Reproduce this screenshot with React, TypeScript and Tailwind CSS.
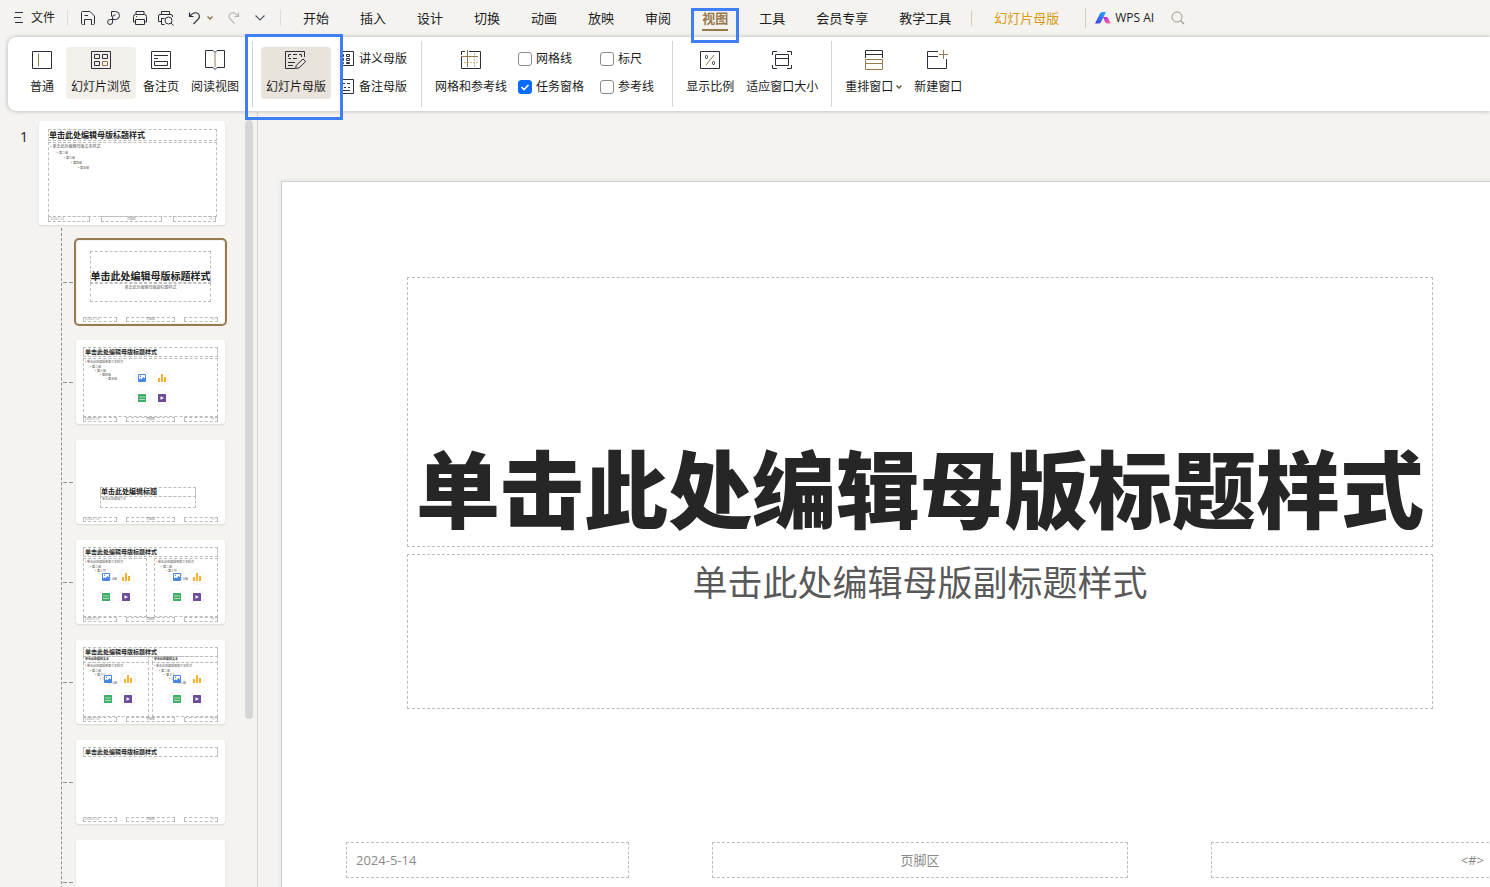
import React from 'react';

const INK = '#2b2f3a';
const BROWN = '#967a4e';

type IconProps = { w: number; h: number; children: React.ReactNode; color?: string };

function Icon({ w, h, children, color = INK }: IconProps) {
  return (
    <svg width={w} height={h} viewBox={`0 0 ${w} ${h}`} fill="none" stroke={color} strokeWidth="1" className="block shrink-0" aria-hidden="true">
      {children}
    </svg>
  );
}

/* ---------- title bar icons ---------- */

const MenuIcon = () => (
  <Icon w={10} h={12}>
    <path d="M1 .5h8M0 5.500h7M1 10.500h8" />
  </Icon>
);

const SaveIcon = () => (
  <Icon w={16} h={16}>
    <path d="M3.500 14.500h-1a1 1 0 0 1-1-1v-11a1 1 0 0 1 1-1h7.500l4.500 4.500v7.500a1 1 0 0 1-1 1h-1M4.500 15v-5.500h7V15M4.500 5.500h3.500" />
  </Icon>
);

const ExportIcon = () => (
  <Icon w={16} h={16}>
    <path d="M5.500 6.500V1.500h4a4 4 0 0 1 0 8H4.300a2.500 2.500 0 1 0 2.300 2.500V7a2 2 0 0 1 2-2h1" />
  </Icon>
);

const PrintIcon = () => (
  <Icon w={16} h={16}>
    <path d="M4 4.500v-3h8v3M3.500 12H1.500V6.500a2 2 0 0 1 2-2h9a2 2 0 0 1 2 2V12H12.500M3.500 9.500h9v5h-9zM4 6.500h1" />
  </Icon>
);

const PreviewIcon = () => (
  <Icon w={16} h={16}>
    <path d="M3.500 4.500v-3h8v3M3 11.500H.5V6a1.500 1.500 0 0 1 1.500-1.500h11A1.500 1.500 0 0 1 14.500 6v1M3.500 8v6.500h3M3.500 8.500h3" />
    <circle cx="10.500" cy="10.500" r="3.500" />
    <path d="M13 13l2.500 2.500" />
  </Icon>
);

const UndoIcon = () => (
  <Icon w={14} h={14}>
    <path strokeWidth="1.200" d="M1.500 1.500v4h4M2 5.200C4 2.500 6.500 1.200 9 2c2.800 1 3 4.200 1.200 6.200L5.500 13" />
  </Icon>
);

const RedoIcon = () => (
  <Icon w={14} h={14} color="#b5b4b1">
    <path strokeWidth="1.200" d="M11.500 1.500v4h-4M11 5.200C9 2.500 6.500 1.200 4.500 2 1.700 3 1.500 6.200 3.300 8.200L7.500 12.500" />
  </Icon>
);

const Caret = ({ color = BROWN }: { color?: string }) => (
  <Icon w={6} h={4} color={color}>
    <path strokeWidth="1.500" d="M.5.5L3 3 5.500.5" />
  </Icon>
);

const ChevronIcon = () => (
  <Icon w={10} h={6} color="#555862">
    <path strokeWidth="1.200" d="M.5.5L5 5 9.500.5" />
  </Icon>
);

const SearchIcon = () => (
  <Icon w={14} h={14} color="#a1978a">
    <circle cx="6" cy="6" r="5" />
    <path strokeWidth="1.300" d="M9.500 9.500l3.500 3.500" />
  </Icon>
);

const AiLogo = () => (
  <svg width="16" height="12" viewBox="0 0 16 12" className="block shrink-0" aria-hidden="true">
    <defs>
      <linearGradient id="ai-blue" x1="1" y1="0" x2="0" y2="1">
        <stop offset="0" stopColor="#18b4ff" />
        <stop offset="1" stopColor="#4b35e8" />
      </linearGradient>
      <linearGradient id="ai-pink" x1="0" y1="0" x2="1" y2="1">
        <stop offset="0" stopColor="#b11cf0" />
        <stop offset="1" stopColor="#ff7a8c" />
      </linearGradient>
    </defs>
    <path fill="url(#ai-blue)" d="M0 11.500L5 1.500Q5.800 0 7.300 0H11L6 10Q5.200 11.500 3.700 11.500z" />
    <path fill="url(#ai-pink)" d="M8 5h3.300q1.200 0 1.700 1l2.900 5.500h-3.700q-1.200 0-1.800-1z" />
  </svg>
);

/* ---------- ribbon icons ---------- */

const NormalIcon = () => (
  <Icon w={20} h={20}>
    <path d="M.5 1.500h19v17H.5z" />
    <path stroke={BROWN} d="M6.500 3.500v13" />
  </Icon>
);

const SorterIcon = () => (
  <Icon w={20} h={20}>
    <path d="M.5 1.500h19v17H.5zM3.500 4.500h5v4h-5zM11.500 4.500h5v4h-5zM3.500 11.500h5v4h-5z" />
    <path stroke={BROWN} d="M11.500 11.500h5v4h-5z" />
  </Icon>
);

const NotesIcon = () => (
  <Icon w={20} h={20}>
    <path d="M.5 1.500h19v17H.5zM3 5.500h14M3 8.500h4M3.500 11.500h13v4h-13z" />
  </Icon>
);

const ReadingIcon = () => (
  <Icon w={20} h={20}>
    <path d="M10 2.500L8 .5H.5v17H8l2 2 2-2h7.500V.5H12z" />
    <path stroke={BROWN} d="M10 3v14" />
  </Icon>
);

const MasterIcon = () => (
  <Icon w={22} h={20}>
    <path d="M10 18.500H.5v-17h19V7M3.500 7V4.500H6M8 4.500h4M14 4.500h2.500V7M3.500 8.500H6M8 8.500h4M3 12.500h7M3 15.500h5" />
    <path d="M10.500 18.500l.8-3.200 6.700-6.300 2.700 2.500-6.500 6.300z" />
  </Icon>
);

const HandoutIcon = () => (
  <Icon w={14} h={16}>
    <path d="M0 .5h13.500v14H0M.5 3.500h3v2h-3zM6.500 3.500h3v2h-3zM.5 7.500h3v2h-3zM6.500 7.500h3v2h-3zM.5 11.500h3v1h-3zM6.500 11.500h3v1h-3z" />
  </Icon>
);

const NotesMasterIcon = () => (
  <Icon w={14} h={16}>
    <path d="M0 .5h13.500v14H0M3 4.500h2M7 4.500h3M0 8.500h2M4 8.500h2M8 8.500h2M0 11.500h10" />
  </Icon>
);

const GridIcon = () => (
  <Icon w={20} h={20}>
    <path d="M.5 7v11.500h19v-17H8M.5 5V1.500H4" />
    <path stroke="#c9b490" strokeDasharray="2 1" d="M13.500 3v14M3 12.500h14" />
    <path stroke={BROWN} d="M6.500 0v17M0 6.500h17" />
  </Icon>
);

const ZoomIcon = () => (
  <Icon w={20} h={20}>
    <path d="M.5 1.500h19v17H.5z" />
    <rect x="5.500" y="5.500" width="2" height="3" rx="1" />
    <rect x="12.500" y="11.500" width="2" height="3" rx="1" />
    <path stroke={BROWN} d="M14 5l-8 10" />
  </Icon>
);

const FitIcon = () => (
  <Icon w={20} h={20}>
    <path d="M.5 5V1.500H5M15 1.500h4.500V5M19.500 15v3.500H15M5 18.500H.5V15M3.500 4.500h13v11h-13zM3.500 8.500h13" />
  </Icon>
);

const ArrangeIcon = () => (
  <Icon w={20} h={20}>
    <path d="M1.500 8V.5h17V8M1.500 4.500h17" />
    <path stroke={BROWN} d="M1.500 9.500h17v10h-17zM1.500 13.500h17" />
  </Icon>
);

const NewWindowIcon = () => (
  <Icon w={22} h={20}>
    <path d="M11 1.500H.5v17h19V9M.5 6.500H11" />
    <path stroke={BROWN} d="M16.500 0v9M12 4.500h9" />
  </Icon>
);

/* ---------- ribbon parts ---------- */

function RibbonButton({ icon, label, tone = 'bg-transparent', caret = false }: { icon: React.ReactNode; label: string; tone?: string; caret?: boolean }) {
  return (
    <button type="button" className={`flex h-[52px] min-w-11 shrink-0 flex-col items-center gap-[7px] rounded px-[5px] pt-[3px] ${tone}`}>
      {icon}
      <span className="flex items-center gap-[3px] whitespace-nowrap leading-5">
        {label}
        {caret && <Caret color="#6b5a42" />}
      </span>
    </button>
  );
}

const Divider = ({ space = 'mx-2' }: { space?: string }) => <div className={`h-[66px] w-px shrink-0 self-start bg-[#d4d4d4] ${space}`} />;

function Check({ id, label, checked = false }: { id: string; label: string; checked?: boolean }) {
  return (
    <div className="flex h-7 items-center gap-1">
      <span className="relative block size-3.5">
        <input
          id={id}
          type="checkbox"
          defaultChecked={checked}
          className="peer block size-3.5 appearance-none rounded-[3px] border border-[#8a8a8a] bg-white checked:border-[#0a6cff] checked:bg-[#0a6cff]"
        />
        <svg viewBox="0 0 14 14" className="pointer-events-none absolute inset-0 hidden peer-checked:block" fill="none" stroke="white" strokeWidth="1.600">
          <path d="M3.500 7l2.500 2.500 4.500-4.500" />
        </svg>
      </span>
      <label htmlFor={id} className="whitespace-nowrap">{label}</label>
    </div>
  );
}

/* ---------- slide thumbnails ---------- */

const Box = ({ at, children = null }: { at: string; children?: React.ReactNode }) => (
  <div className={`absolute border border-dashed border-[#bdbdbd] ${at}`}>{children}</div>
);

const TITLE = '单击此处编辑母版标题样式';
const BODY = '单击此处编辑母版文本样式';

const SmallFooter = () => (
  <div className="absolute inset-x-[7px] bottom-[2px] flex h-[5px] justify-between text-[3px] leading-[3px] text-[#888]">
    <span className="w-[34px] border border-dashed border-[#bdbdbd] pl-px">2024-5-14</span>
    <span className="w-[49px] border border-dashed border-[#bdbdbd] text-center">页脚区</span>
    <span className="w-[34px] border border-dashed border-[#bdbdbd] pr-px text-right">&lt;#&gt;</span>
  </div>
);

const SmallTitle = () => (
  <Box at="left-[7px] top-[7px] h-2.5 w-[135px]">
    <p className="whitespace-nowrap pl-px text-[6px] font-bold leading-2 text-[#222]">{TITLE}</p>
  </Box>
);

const Levels = () => (
  <div className="whitespace-nowrap pl-px pt-px text-[3px] leading-1 text-[#555]">
    <p>• {BODY}</p>
    <p className="mt-px pl-[5px]">• 第二级</p>
    <p className="pl-[10px]">• 第三级</p>
    <p className="pl-[15px]">• 第四级</p>
    <p className="pl-[21px]">• 第五级</p>
  </div>
);

function InsertIcons({ at }: { at: string }) {
  const cell = 'flex size-3.5 items-center justify-center rounded-full bg-white/60 shadow-[0_0_2px_rgba(0,0,0,0.14)]';
  return (
    <div className={`absolute grid grid-cols-2 gap-1.5 ${at}`}>
      <span className={cell}>
        <svg width="8" height="8" viewBox="0 0 8 8">
          <rect width="8" height="8" rx="1" fill="#4a86e0" />
          <path d="M1 1h6v3.500L5.500 3 3.500 5.200 2.300 4.200 1 5.500z" fill="#fff" />
          <circle cx="2.500" cy="2.300" r=".7" fill="#4a86e0" />
        </svg>
      </span>
      <span className={cell}>
        <svg width="8" height="8" viewBox="0 0 8 8" fill="#fbb02d">
          <path d="M0 4h2v4H0zM3 0h2v8H3zM6 3h2v5H6z" />
        </svg>
      </span>
      <span className={cell}>
        <svg width="8" height="8" viewBox="0 0 8 8">
          <rect width="8" height="8" rx=".5" fill="#3fae68" />
          <path d="M1 3h6M1 5.500h6" stroke="#d9f2e2" strokeWidth=".7" />
        </svg>
      </span>
      <span className={cell}>
        <svg width="8" height="8" viewBox="0 0 8 8">
          <rect width="8" height="8" rx=".5" fill="#6b4c9a" />
          <path d="M2.500 2.200L6 4 2.500 5.800z" fill="#fff" />
        </svg>
      </span>
    </div>
  );
}

function LayoutItem({ selected = false, label, children = null }: { selected?: boolean; label: string; children?: React.ReactNode }) {
  return (
    <li className="flex shrink-0 items-center">
      <span className="flex w-3.5 gap-0.5 pl-px" aria-hidden="true">
        <i className="h-px w-1 bg-[#8e8e8e]" />
        <i className="h-px w-1 bg-[#8e8e8e]" />
      </span>
      <button
        type="button"
        aria-label={label}
        className={`relative block h-[84px] w-[149px] overflow-hidden rounded-[3px] bg-white text-left ${
          selected ? 'outline-2 outline-[#967a52] ring-1 ring-inset ring-[#f3f2ee]' : 'shadow-[0_1px_2px_rgba(0,0,0,0.12)]'
        }`}
      >
        {children}
      </button>
    </li>
  );
}

function SlidePanel() {
  return (
    <aside className="flex w-[258px] shrink-0 overflow-hidden border-r border-[#d4d4d4]">
      <div className="flex w-[39px] shrink-0 justify-end pr-[11px] pt-[15px] text-sm leading-5 text-[#222]">1</div>
      <div className="w-[206px] shrink-0 pt-[9px]">
        <button type="button" aria-label="幻灯片母版" className="relative block h-[104px] w-[186px] rounded-[3px] bg-white text-left shadow-[0_1px_2px_rgba(0,0,0,0.12)]">
          <Box at="left-[9px] top-2 h-3 w-[169px]">
            <p className="whitespace-nowrap text-[8px] font-bold leading-2.5 text-[#222]">{TITLE}</p>
          </Box>
          <Box at="left-[9px] top-[21px] h-[75px] w-[169px]">
            <div className="whitespace-nowrap pl-px pt-px text-[4px] leading-[5px] text-[#555]">
              <p>• {BODY}</p>
              <div className="pt-0.5 text-[3px]">
                <p className="pl-[7px]">• 第二级</p>
                <p className="pl-[14px]">• 第三级</p>
                <p className="pl-[21px]">• 第四级</p>
                <p className="pl-[28px]">• 第五级</p>
              </div>
            </div>
          </Box>
          <div className="absolute inset-x-[9px] bottom-[3px] flex h-1.5 justify-between text-[3px] leading-1 text-[#888]">
            <span className="w-[42px] border border-dashed border-[#bdbdbd] pl-px">2024-5-14</span>
            <span className="w-[61px] border border-dashed border-[#bdbdbd] text-center">页脚区</span>
            <span className="w-[43px] border border-dashed border-[#bdbdbd] pr-px text-right">&lt;#&gt;</span>
          </div>
        </button>
        <ul className="ml-[22px] mt-[3px] flex h-full flex-col gap-4 border-l border-dashed border-[#8e8e8e] pt-3">
          <LayoutItem label="标题幻灯片" selected>
            <Box at="left-3.5 top-[11px] h-8 w-[121px]">
              <p className="-mx-px whitespace-nowrap pt-[18px] text-center text-[10px] font-bold leading-3 text-[#222]">{TITLE}</p>
            </Box>
            <Box at="left-3.5 top-[43px] h-[19px] w-[121px]">
              <p className="whitespace-nowrap pt-px text-center text-[4px] leading-[5px] text-[#666]">单击此处编辑母版副标题样式</p>
            </Box>
            <SmallFooter />
          </LayoutItem>
          <LayoutItem label="标题和内容">
            <SmallTitle />
            <Box at="left-[7px] top-[18px] h-[59px] w-[135px]"><Levels /></Box>
            <InsertIcons at="left-[59px] top-[31px]" />
            <SmallFooter />
          </LayoutItem>
          <LayoutItem label="节标题">
            <Box at="left-6 top-[47px] h-2.5 w-24">
              <p className="whitespace-nowrap text-[7px] font-bold leading-2 text-[#222]">单击此处编辑标题</p>
            </Box>
            <Box at="left-6 top-14 h-3 w-24">
              <p className="whitespace-nowrap pl-px text-[3px] leading-[5px] text-[#666]">单击此处编辑文本</p>
            </Box>
            <SmallFooter />
          </LayoutItem>
          <LayoutItem label="两栏内容">
            <SmallTitle />
            <Box at="left-[7px] top-[18px] h-[59px] w-16"><Levels /></Box>
            <Box at="left-[78px] top-[18px] h-[59px] w-16"><Levels /></Box>
            <InsertIcons at="left-[23px] top-[30px]" />
            <InsertIcons at="left-[94px] top-[30px]" />
            <SmallFooter />
          </LayoutItem>
          <LayoutItem label="比较">
            <SmallTitle />
            <Box at="left-[7px] top-4 h-[7px] w-[66px]">
              <p className="whitespace-nowrap pl-px text-[3px] font-bold leading-[5px] text-[#333]">单击此处编辑文本</p>
            </Box>
            <Box at="left-[76px] top-4 h-[7px] w-[66px]">
              <p className="whitespace-nowrap pl-px text-[3px] font-bold leading-[5px] text-[#333]">单击此处编辑文本</p>
            </Box>
            <Box at="left-[7px] top-[22px] h-[55px] w-[66px]"><Levels /></Box>
            <Box at="left-[76px] top-[22px] h-[55px] w-[66px]"><Levels /></Box>
            <InsertIcons at="left-[25px] top-[32px]" />
            <InsertIcons at="left-[94px] top-[32px]" />
            <SmallFooter />
          </LayoutItem>
          <LayoutItem label="仅标题">
            <SmallTitle />
            <SmallFooter />
          </LayoutItem>
          <LayoutItem label="空白" />
        </ul>
      </div>
      <div className="mt-2 h-[599px] w-2 shrink-0 rounded-full bg-[#d6d6d6]" />
    </aside>
  );
}

/* ---------- slide being edited ---------- */

function SlideCanvas() {
  const field = 'border border-dashed border-[#bdbdbd]';
  return (
    <main className="min-w-0 flex-1 overflow-hidden pl-[23px] pt-[69px]">
      <section className="flex h-[720px] w-[1278px] flex-col border border-[#d0d0d0] bg-white pt-[95px] shadow-[0_0_4px_rgba(0,0,0,0.1)]">
        <div className={`mx-[125px] flex h-[270px] items-end justify-center pb-2 ${field}`}>
          <h1 className="whitespace-nowrap text-[84px] font-black leading-[96px] text-[#262626]">{TITLE}</h1>
        </div>
        <div className={`mx-[125px] mt-[7px] h-[155px] pt-1 text-center text-[35px] leading-[48px] text-[#595959] ${field}`}>
          单击此处编辑母版副标题样式
        </div>
        <div className="mx-16 mt-[133px] flex h-9 justify-between text-[13px] leading-[34px] text-[#8a8a8a]">
          <div className={`w-[283px] px-[9px] ${field}`}>2024-5-14</div>
          <div className={`w-[416px] text-center ${field}`}>页脚区</div>
          <div className={`w-[283px] px-[9px] text-right ${field}`}>&lt;#&gt;</div>
        </div>
      </section>
    </main>
  );
}

const TABS = ['开始', '插入', '设计', '切换', '动画', '放映', '审阅', '视图', '工具', '会员专享', '教学工具'];

function TitleBar() {
  return (
    <header className="mb-0.5 flex h-[35px] shrink-0 items-center pl-3.5">
      <button type="button" className="flex items-center gap-[7px] whitespace-nowrap">
        <MenuIcon />
        文件
      </button>
      <div className="ml-3 h-4 w-px bg-[#dcdbd7]" />
      <div className="ml-3 flex items-center gap-2.5">
        <button type="button" aria-label="保存"><SaveIcon /></button>
        <button type="button" aria-label="输出"><ExportIcon /></button>
        <button type="button" aria-label="打印"><PrintIcon /></button>
        <button type="button" aria-label="打印预览"><PreviewIcon /></button>
      </div>
      <button type="button" aria-label="撤销" className="ml-3.5"><UndoIcon /></button>
      <button type="button" aria-label="撤销列表" className="ml-[5px]"><Caret /></button>
      <button type="button" aria-label="恢复" className="ml-3.5"><RedoIcon /></button>
      <button type="button" aria-label="更多" className="ml-3.5"><ChevronIcon /></button>
      <div className="ml-[15px] h-4 w-px bg-[#dcdbd7]" />
      <nav className="ml-[22px] flex items-center gap-[31px] text-[13px]">
        {TABS.map((tab) =>
          tab === '视图' ? (
            <button key={tab} type="button" className="relative whitespace-nowrap font-bold leading-5 text-[#967a4e]">
              {tab}
              <span className="absolute inset-x-0 top-[21px] h-0.5 bg-[#967a4e]" />
              <span className="pointer-events-none absolute -inset-x-[11px] top-0 z-20 h-[35px] border-3 border-[#3f7ef7]" />
            </button>
          ) : (
            <button key={tab} type="button" className="whitespace-nowrap leading-5">{tab}</button>
          ),
        )}
      </nav>
      <div className="ml-5 h-4 w-px bg-[#cfcdc8]" />
      <button type="button" className="ml-[22px] whitespace-nowrap text-[13px] leading-5 text-[#d99a13]">幻灯片母版</button>
      <div className="ml-[26px] h-5 w-px bg-[#cfcdc8]" />
      <button type="button" className="ml-[9px] flex items-center gap-1 whitespace-nowrap">
        <AiLogo />
        WPS AI
      </button>
      <button type="button" aria-label="搜索" className="ml-[17px]"><SearchIcon /></button>
    </header>
  );
}

function Ribbon() {
  return (
    <div className="relative z-10 ml-2 flex h-[74px] shrink-0 rounded-l-lg bg-white pl-3 pt-1 shadow-[0_0_4px_rgba(0,0,0,0.28)]">
      <div className="flex gap-0.5 pt-1.5">
        <RibbonButton icon={<NormalIcon />} label="普通" />
        <RibbonButton icon={<SorterIcon />} label="幻灯片浏览" tone="bg-[#f3f0eb]" />
        <RibbonButton icon={<NotesIcon />} label="备注页" />
        <RibbonButton icon={<ReadingIcon />} label="阅读视图" />
      </div>
      <Divider />
      <div className="relative pt-1.5">
        <RibbonButton icon={<MasterIcon />} label="幻灯片母版" tone="bg-[#e8e3db]" />
        <span className="pointer-events-none absolute -left-4 -right-3 -top-[7px] h-[86px] border-3 border-[#3f7ef7]" />
      </div>
      <div className="ml-[9px] flex flex-col pt-1">
        <button type="button" className="flex h-7 items-center gap-[5px] whitespace-nowrap"><HandoutIcon />讲义母版</button>
        <button type="button" className="flex h-7 items-center gap-[5px] whitespace-nowrap"><NotesMasterIcon />备注母版</button>
      </div>
      <Divider space="ml-3.5 mr-2" />
      <div className="pt-1.5">
        <RibbonButton icon={<GridIcon />} label="网格和参考线" />
      </div>
      <div className="ml-1.5 grid grid-cols-[auto_auto] content-start gap-x-4 pt-1">
        <Check id="grid-lines" label="网格线" />
        <Check id="ruler" label="标尺" />
        <Check id="task-pane" label="任务窗格" checked />
        <Check id="guides" label="参考线" />
      </div>
      <Divider space="ml-[18px] mr-2" />
      <div className="flex gap-0.5 pt-1.5">
        <RibbonButton icon={<ZoomIcon />} label="显示比例" />
        <RibbonButton icon={<FitIcon />} label="适应窗口大小" />
      </div>
      <Divider />
      <div className="flex gap-0.5 pt-1.5">
        <RibbonButton icon={<ArrangeIcon />} label="重排窗口" caret />
        <RibbonButton icon={<NewWindowIcon />} label="新建窗口" />
      </div>
    </div>
  );
}

export default function App() {
  return (
    <div className="flex h-screen flex-col overflow-hidden bg-[#f4f3ef] font-['Open_Sans','Noto_Sans_CJK_SC',sans-serif] text-xs text-[#1c1c1c]">
      <TitleBar />
      <Ribbon />
      <div className="flex min-h-0 flex-1 pt-px">
        <SlidePanel />
        <SlideCanvas />
      </div>
    </div>
  );
}
